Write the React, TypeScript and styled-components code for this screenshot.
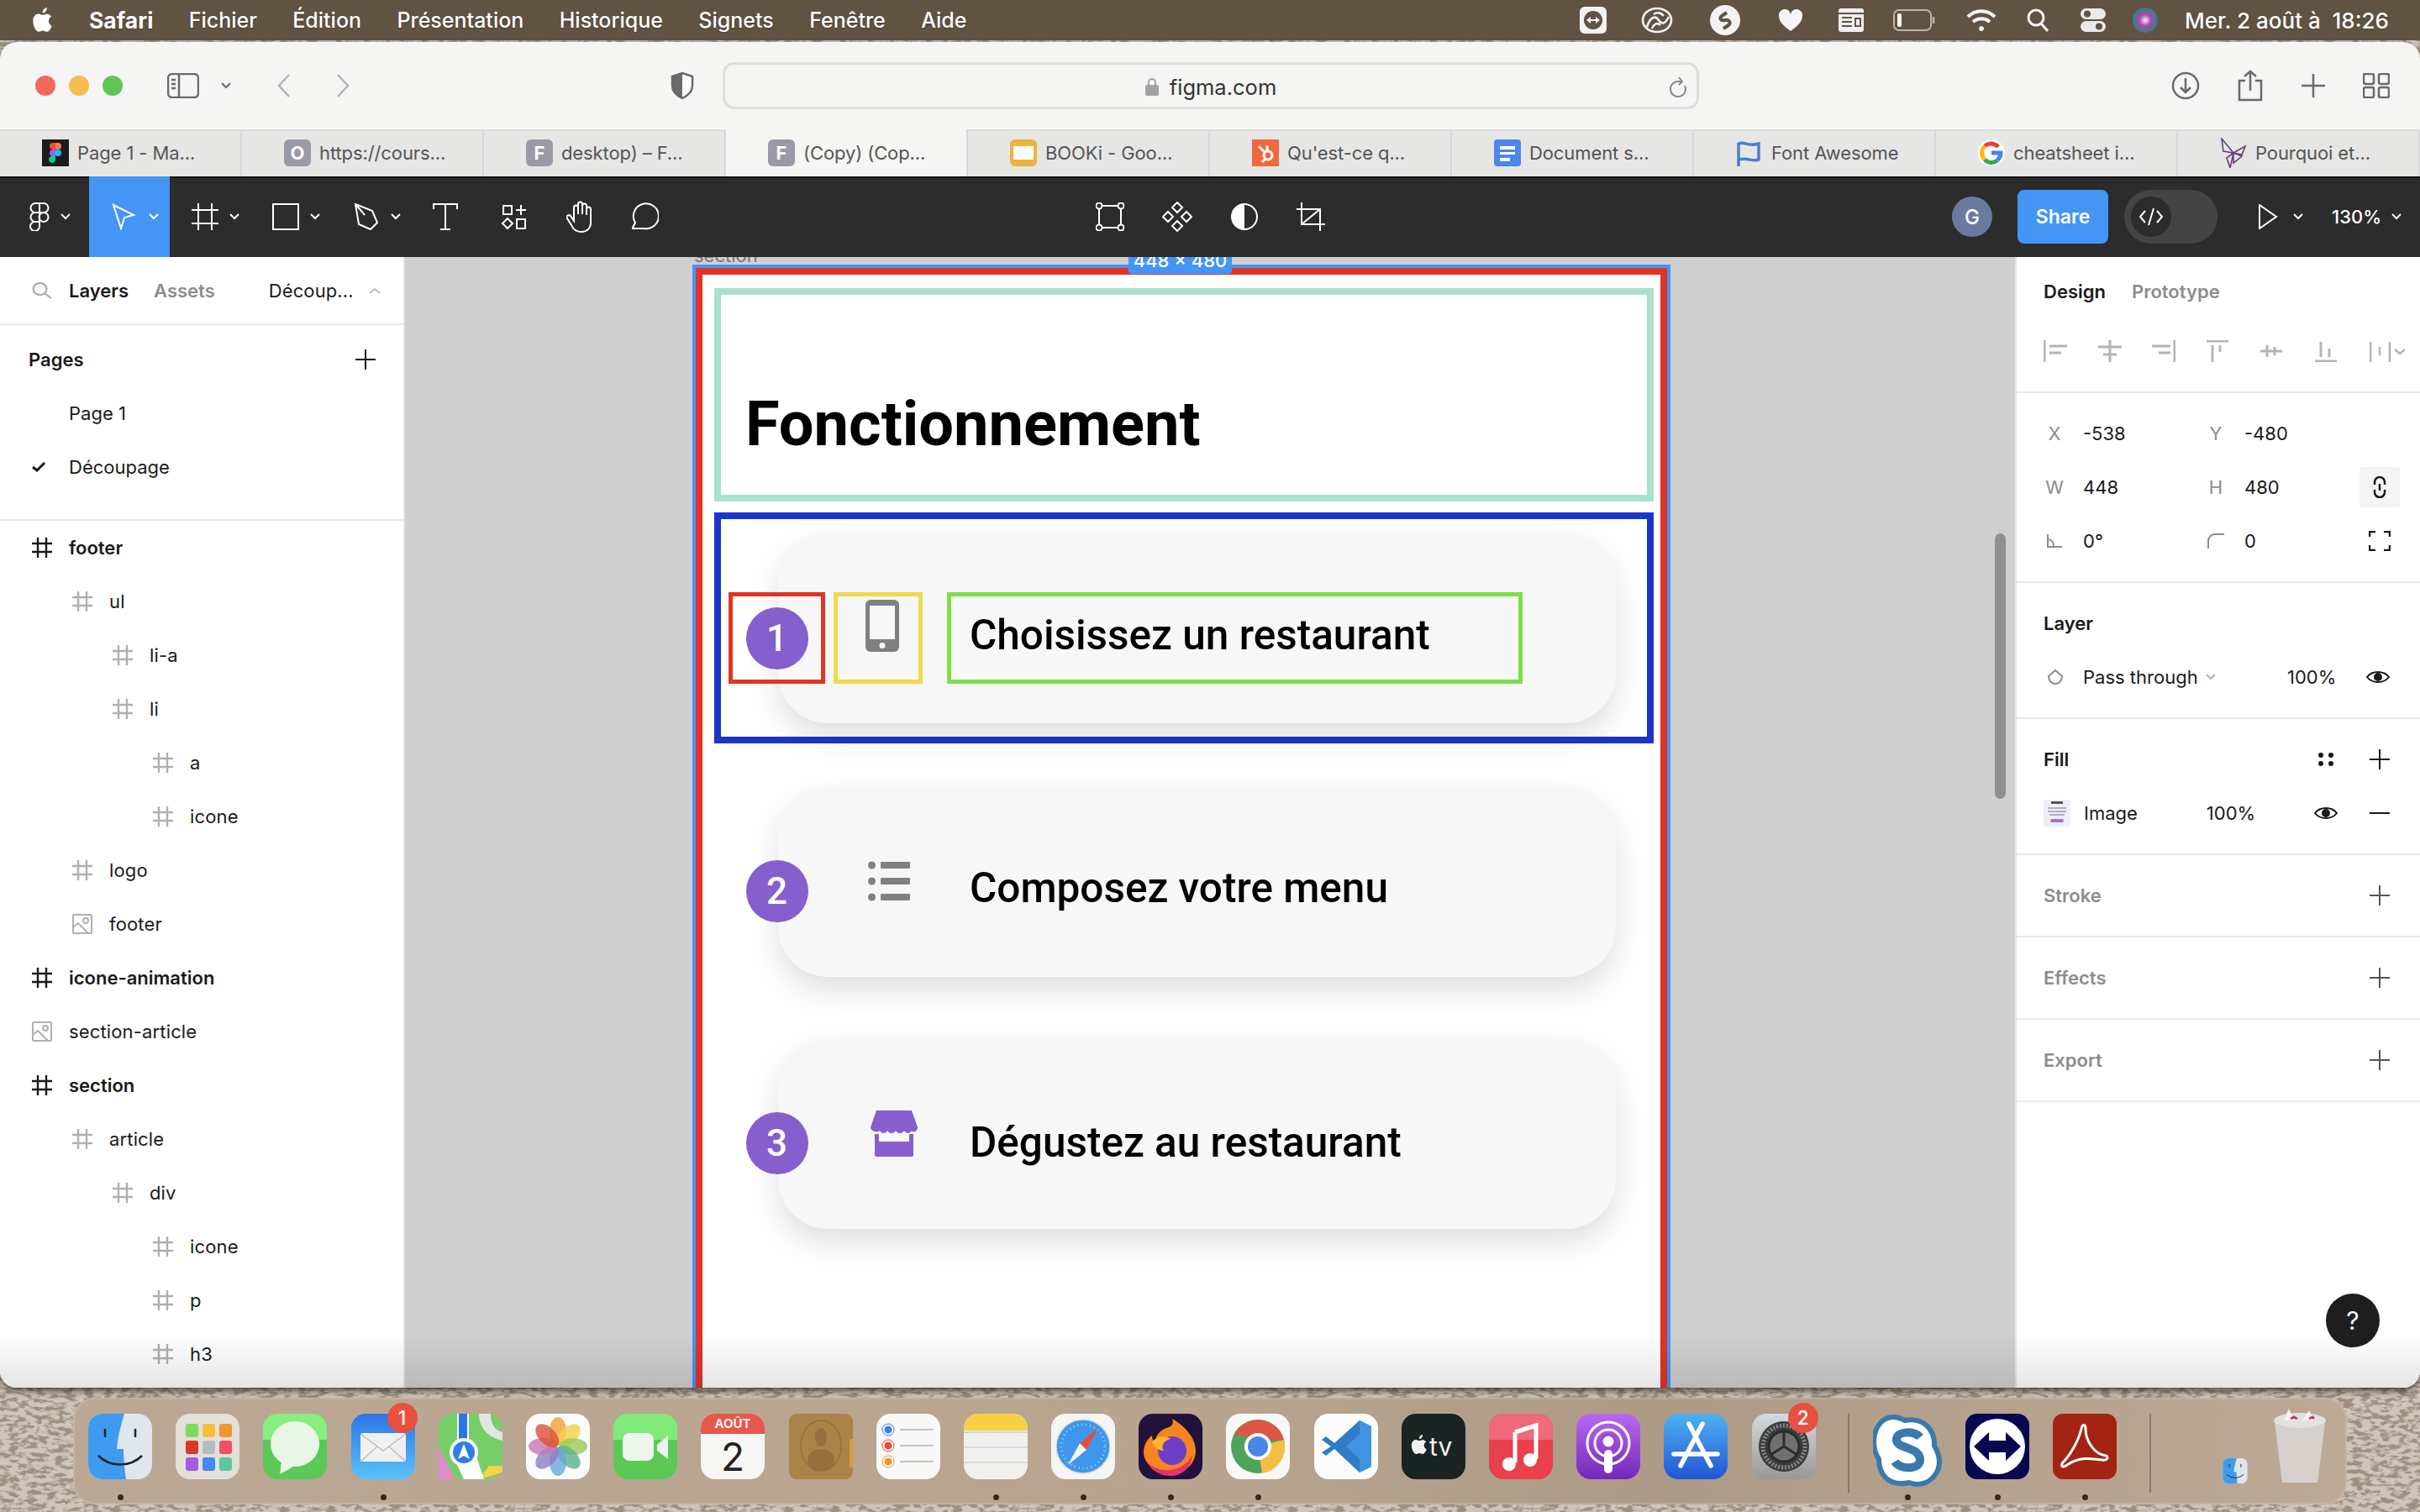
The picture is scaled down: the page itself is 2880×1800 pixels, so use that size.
import React from "react";
import styled, { createGlobalStyle } from "styled-components";

const GlobalStyle = createGlobalStyle`
  html, body { margin: 0; padding: 0; }
  body { width: 2880px; height: 1800px; overflow: hidden; font-family: "Inter", "Liberation Sans", sans-serif; }
  * { box-sizing: border-box; }
`;

const wallpaper = `url("data:image/svg+xml,%3Csvg xmlns='http://www.w3.org/2000/svg' width='600' height='300'%3E%3Cfilter id='n'%3E%3CfeTurbulence type='fractalNoise' baseFrequency='.09 .2' numOctaves='3' seed='4'/%3E%3CfeColorMatrix values='0 0 0 0 .34 0 0 0 0 .28 0 0 0 0 .22 4 4 0 0 -3.7'/%3E%3C/filter%3E%3Crect width='600' height='300' fill='%23cfc5b8'/%3E%3Crect width='600' height='300' filter='url(%23n)'/%3E%3C/svg%3E")`;

const Desktop = styled.div`
  width: 2880px;
  height: 1800px;
  display: flex;
  flex-direction: column;
  background: #a3968a ${wallpaper};
  overflow: hidden;
`;

/* ---------- mac menu bar ---------- */
const MenuBar = styled.div`
  height: 48px;
  flex: none;
  background: #615342;
  display: flex;
  align-items: center;
  padding: 0 37px 0 38px;
  color: #fff;
  font-size: 25px;
  text-shadow: 0 1px 2px rgba(0, 0, 0, 0.3);
`;

const MenuItem = styled.span`
  margin-left: 42.4px;
  font-weight: 500;
  white-space: nowrap;
`;

const AppName = styled.span`
  margin-left: 42px;
  font-size: 26.5px;
  font-weight: 700;
`;

const StatusArea = styled.div`
  margin-left: auto;
  display: flex;
  align-items: center;
`;

const StatusSlot = styled.div<{ $w: number }>`
  width: ${(p) => p.$w}px;
  display: flex;
  justify-content: center;
  align-items: center;
`;

const Clock = styled.span`
  margin-left: 18px;
  font-weight: 500;
  font-size: 26px;
  white-space: pre;
`;

/* ---------- window ---------- */
const Window = styled.div`
  margin-top: 2px;
  height: 1602px;
  flex: none;
  position: relative;
  display: flex;
  flex-direction: column;
  background: #f5f5f3;
  border-radius: 20px;
  overflow: hidden;
  box-shadow: 0 4px 8px rgba(0, 0, 0, 0.6);
  &::after {
    content: "";
    position: absolute;
    left: 0;
    right: 0;
    bottom: 0;
    height: 64px;
    pointer-events: none;
    background: linear-gradient(rgba(0, 0, 0, 0), rgba(0, 0, 0, 0.1));
  }
`;

const SafariBar = styled.div`
  height: 104px;
  flex: none;
  display: flex;
  align-items: center;
  padding-left: 42px;
  color: #6a6a6a;
`;

const Light = styled.span<{ $c: string }>`
  width: 24px;
  height: 24px;
  border-radius: 50%;
  margin-right: 16px;
  background: ${(p) => p.$c};
`;

const NavCluster = styled.div`
  display: flex;
  align-items: center;
  margin-left: 37px;
  gap: 26px;
`;

const ChevronNav = styled.div`
  display: flex;
  gap: 54px;
  margin-left: 55px;
  color: #b4b4b4;
`;

const ShieldSlot = styled.div`
  margin-left: 382px;
  display: flex;
`;

const UrlBar = styled.div`
  width: 1162px;
  height: 56px;
  margin-left: 34px;
  border: 3px solid #dededc;
  border-radius: 14px;
  display: flex;
  align-items: center;
  justify-content: center;
  position: relative;
  color: #333;
  font-size: 25.5px;
  padding-top: 2px;
  gap: 13px;
`;

const Reload = styled.span`
  position: absolute;
  right: 10px;
  top: 14px;
  display: flex;
  color: #8a8a8a;
`;

const SafariActions = styled.div`
  margin-left: auto;
  display: flex;
  align-items: center;
  gap: 44px;
  padding-right: 36px;
`;

const TabStrip = styled.div`
  height: 56px;
  flex: none;
  display: flex;
`;

const Tab = styled.div<{ $active?: boolean }>`
  width: 288px;
  display: flex;
  align-items: center;
  padding-left: 50px;
  gap: 10px;
  font-size: 22px;
  letter-spacing: -0.1px;
  color: #555;
  background: ${(p) => (p.$active ? "#f5f5f3" : "#e6e6e5")};
  border-right: 2px solid #d8d8d8;
  box-shadow: ${(p) => (p.$active ? "none" : "inset 0 2px 0 #dcdcdc")};
`;

const Favicon = styled.span<{ $bg: string }>`
  width: 32px;
  height: 32px;
  flex: none;
  border-radius: 6px;
  display: flex;
  align-items: center;
  justify-content: center;
  color: #fff;
  font-size: 22px;
  font-weight: 700;
  background: ${(p) => p.$bg};
`;

/* ---------- figma toolbar ---------- */
const Toolbar = styled.div`
  height: 96px;
  flex: none;
  display: grid;
  grid-template-columns: 1fr auto 1fr;
  align-items: stretch;
  background: #2c2c2c;
  box-shadow: inset 0 2px 0 #111;
  color: #fff;
`;

const ToolGroup = styled.div`
  display: flex;
  align-items: stretch;
`;

const ToolCell = styled.div<{ $w: number; $active?: boolean; $menu?: boolean }>`
  width: ${(p) => p.$w}px;
  display: flex;
  align-items: center;
  justify-content: center;
  gap: ${(p) => (p.$menu ? "13px" : "0")};
  padding-left: ${(p) => (p.$menu ? "13px" : "0")};
  background: ${(p) => (p.$active ? "#4495f5" : "transparent")};
`;

const CenterTools = styled.div`
  display: flex;
  align-items: center;
  gap: 45px;
`;

const RightTools = styled.div`
  display: flex;
  align-items: center;
  justify-content: flex-end;
  padding-right: 22px;
`;

const Avatar = styled.span`
  width: 48px;
  height: 48px;
  border-radius: 50%;
  background: #6a7aa0;
  display: flex;
  align-items: center;
  justify-content: center;
  font-size: 24px;
  font-weight: 500;
`;

const ShareButton = styled.span`
  width: 108px;
  height: 64px;
  margin-left: 30px;
  border-radius: 8px;
  background: #4495f5;
  display: flex;
  align-items: center;
  justify-content: center;
  font-size: 23px;
  font-weight: 600;
`;

const CodeToggle = styled.span`
  width: 111px;
  height: 64px;
  margin-left: 19px;
  border-radius: 32px;
  background: #444;
  padding: 8px;
  display: flex;
`;

const CodeKnob = styled.span`
  width: 48px;
  height: 48px;
  border-radius: 50%;
  background: #2c2c2c;
  display: flex;
  align-items: center;
  justify-content: center;
`;

const PlayCell = styled.span`
  display: flex;
  align-items: center;
  gap: 18px;
  margin-left: 48px;
`;

const Zoom = styled.span`
  display: flex;
  align-items: center;
  gap: 12px;
  margin-left: 34px;
  font-size: 22px;
  font-weight: 500;
`;

/* ---------- editor ---------- */
const Editor = styled.div`
  flex: 1;
  min-height: 0;
  display: flex;
`;

const LeftPanel = styled.aside`
  width: 482px;
  flex: none;
  background: #fff;
  border-right: 2px solid #e5e5e5;
  overflow: hidden;
`;

const PanelHeader = styled.div`
  height: 81px;
  display: flex;
  align-items: center;
  padding-left: 38px;
  border-bottom: 2px solid #e8e8e8;
  font-size: 22px;
`;

const HeaderTab = styled.span<{ $active?: boolean; $ml: number }>`
  margin-left: ${(p) => p.$ml}px;
  font-weight: 600;
  color: ${(p) => (p.$active ? "#1a1a1a" : "#8c8c8c")};
`;

const PagePicker = styled.span`
  margin-left: 64px;
  display: flex;
  align-items: center;
  gap: 18px;
  color: #1a1a1a;
  letter-spacing: 0.1px;
`;

const PagesBlock = styled.div`
  padding: 9px 0 30px;
  border-bottom: 2px solid #e8e8e8;
`;

const PageRow = styled.div<{ $title?: boolean }>`
  height: 64px;
  display: flex;
  align-items: center;
  position: relative;
  padding-left: ${(p) => (p.$title ? 34 : 82)}px;
  font-size: 22px;
  font-weight: ${(p) => (p.$title ? 600 : 400)};
  color: #1a1a1a;
`;

const RowEnd = styled.span`
  position: absolute;
  left: 423px;
  display: flex;
`;

const RowCheck = styled.span`
  position: absolute;
  left: 38px;
  display: flex;
`;

const LayerRow = styled.div<{ $depth: number; $bold?: boolean }>`
  height: 64px;
  display: flex;
  align-items: center;
  gap: 20px;
  padding-left: ${(p) => 38 + p.$depth * 48}px;
  font-size: 22px;
  font-weight: ${(p) => (p.$bold ? 600 : 400)};
  letter-spacing: ${(p) => (p.$bold ? "0" : "0.15px")};
  color: #1a1a1a;
  svg { flex: none; }
`;

const Canvas = styled.main`
  flex: 1;
  min-width: 0;
  position: relative;
  overflow: hidden;
  background: #cfcfcf;
  padding: 9px 0 0 342px;
`;

const FrameLabel = styled.span`
  position: absolute;
  top: -15px;
  left: 344px;
  font-size: 22px;
  color: #777;
`;

const SizeBadge = styled.span`
  position: absolute;
  top: -8px;
  left: 861px;
  width: 123px;
  height: 28px;
  z-index: 2;
  border-radius: 0 0 4px 4px;
  background: #4495f5;
  color: #fff;
  font-size: 22px;
  font-weight: 500;
  text-align: center;
  line-height: 24px;
`;

const Selection = styled.div`
  width: 1164px;
  height: 1500px;
  border: 4px solid #4495f5;
`;

const SectionFrame = styled.section`
  height: 100%;
  border: 8px solid #e13426;
  background: #fff;
  padding: 16px 8px 0 14px;
`;

const HeadingBox = styled.div`
  height: 254px;
  border: 8px solid #abe0d0;
  padding: 114px 0 0 29px;
`;

const Heading = styled.h2`
  margin: 0;
  font-family: "Roboto", sans-serif;
  font-size: 74px;
  line-height: 80px;
  font-weight: 700;
  color: #000;
`;

const StepBox = styled.div`
  height: 275px;
  margin-top: 13px;
  border: 8px solid #1b35c9;
  padding: 17px 0 0 68px;
`;

const StepCard = styled.article<{ $mt?: number; $pt: number }>`
  width: 997px;
  height: 226px;
  margin-top: ${(p) => p.$mt ?? 0}px;
  border-radius: 60px;
  background: #f7f7f7;
  box-shadow: 0 16px 36px rgba(0, 0, 0, 0.13);
  display: flex;
  align-items: center;
  padding-top: ${(p) => p.$pt}px;
`;

const LooseCard = styled(StepCard)`
  margin-left: 76px;
`;

const BadgeSlot = styled.div<{ $border?: string }>`
  width: 115px;
  height: 109px;
  margin-left: -59px;
  flex: none;
  display: flex;
  align-items: center;
  justify-content: center;
  border: 5px solid ${(p) => p.$border ?? "transparent"};
`;

const StepNumber = styled.span`
  width: 74px;
  height: 74px;
  border-radius: 50%;
  background: #865fce;
  color: #fff;
  display: flex;
  align-items: center;
  justify-content: center;
  font-family: "Roboto", sans-serif;
  font-size: 44px;
  font-weight: 500;
`;

const IconSlot = styled.div<{ $border?: string; $x: number; $y: number }>`
  width: 106px;
  height: 109px;
  margin-left: 10px;
  flex: none;
  border: 5px solid ${(p) => p.$border ?? "transparent"};
  padding: ${(p) => p.$y}px 0 0 ${(p) => p.$x}px;
  svg { display: block; }
`;

const TextSlot = styled.div<{ $border?: string; $lift?: number }>`
  width: 685px;
  height: 109px;
  margin-left: 29px;
  flex: none;
  display: flex;
  align-items: center;
  padding: 0 0 ${(p) => p.$lift ?? 8}px 22px;
  border: 5px solid ${(p) => p.$border ?? "transparent"};
`;

const StepTitle = styled.h3`
  margin: 0;
  font-family: "Roboto", sans-serif;
  font-size: 49.5px;
  font-weight: 500;
  color: #000;
  white-space: nowrap;
`;

const ScrollThumb = styled.span`
  position: absolute;
  top: 329px;
  right: 11px;
  width: 13px;
  height: 316px;
  border-radius: 7px;
  background: #8f8f8f;
`;

const HelpButton = styled.span`
  position: absolute;
  right: 48px;
  bottom: 48px;
  width: 64px;
  height: 64px;
  border-radius: 50%;
  background: #1e1e1e;
  color: #fff;
  z-index: 3;
  display: flex;
  align-items: center;
  justify-content: center;
  font-size: 30px;
`;

const RightPanel = styled.aside`
  width: 482px;
  flex: none;
  background: #fff;
  border-left: 2px solid #e5e5e5;
  font-size: 22px;
  color: #1a1a1a;
`;

const DesignHead = styled.div`
  height: 162px;
  border-bottom: 2px solid #e8e8e8;
`;

const DesignTabs = styled.div`
  height: 81px;
  padding-left: 32px;
  display: flex;
  align-items: center;
  gap: 31px;
`;

const DesignTab = styled.span<{ $active?: boolean }>`
  font-weight: 600;
  color: ${(p) => (p.$active ? "#1a1a1a" : "#8c8c8c")};
`;

const AlignRow = styled.div`
  display: flex;
  padding-left: 32px;
  gap: 36.6px;
  color: #b3b3b3;
  height: 26px;
  margin-top: 18px;
`;

const PanelSection = styled.div`
  padding: 16px 0;
  border-bottom: 2px solid #e8e8e8;
`;

const PropRow = styled.div`
  height: 64px;
  display: grid;
  grid-template-columns: 58px 134px 58px 125px 1fr;
  padding-left: 21px;
  align-items: center;
`;

const PropLabel = styled.span`
  color: #8c8c8c;
  display: flex;
  justify-content: center;
  padding-right: 10px;
  font-size: 22px;
`;

const ActionCell = styled.span<{ $boxed?: boolean }>`
  width: 48px;
  height: 48px;
  margin-left: 12px;
  display: flex;
  align-items: center;
  justify-content: center;
  border-radius: 4px;
  background: ${(p) => (p.$boxed ? "#f4f4f4" : "transparent")};
`;

const SectionRow = styled.div`
  height: 64px;
  padding-left: 32px;
  padding-right: 36px;
  display: flex;
  align-items: center;
  position: relative;
`;

const SectionTitle = styled.span<{ $muted?: boolean }>`
  font-weight: 600;
  color: ${(p) => (p.$muted ? "#8c8c8c" : "#1a1a1a")};
`;

const RowTools = styled.span<{ $gap?: number }>`
  margin-left: auto;
  display: flex;
  align-items: center;
  gap: ${(p) => p.$gap ?? 0}px;
`;

const ModeIcon = styled.span`
  width: 48px;
  display: flex;
  justify-content: center;
`;

const PassValue = styled.span`
  display: flex;
  align-items: center;
  gap: 9px;
  width: 290px;
  margin-left: -10px;
`;

const Percent = styled.span<{ $w: number; $ml: number }>`
  width: ${(p) => p.$w}px;
  margin-left: ${(p) => p.$ml}px;
`;

const FillThumb = styled.span`
  display: flex;
  margin-right: 16px;
`;

const HeaderChevron = styled.svg`
  flex: none;
`;

/* ---------- dock ---------- */
const Dock = styled.div`
  width: 2706px;
  height: 127px;
  margin: 12px 0 0 87px;
  flex: none;
  padding: 19px 0 0 18px;
  display: flex;
  border-radius: 26px;
  background: linear-gradient(90deg, #bba894, #b8a48f 50%, #ad9b87 70%, #bcaa97);
  box-shadow: inset 0 0 0 2px rgba(255, 255, 255, 0.14);
`;

const DockItem = styled.div<{ $w?: number; $ml?: number; $running?: boolean }>`
  width: ${(p) => p.$w ?? 76}px;
  margin-left: ${(p) => p.$ml ?? 28.2}px;
  flex: none;
  display: flex;
  flex-direction: column;
  align-items: center;
  position: relative;
  &:first-child { margin-left: 0; }
  &::after {
    content: "";
    position: absolute;
    top: 96px;
    left: 50%;
    width: 7px;
    height: 7px;
    margin-left: -3px;
    border-radius: 50%;
    background: ${(p) => (p.$running ? "#3a2818" : "transparent")};
  }
`;

const DockBadge = styled.span`
  position: absolute;
  top: -13px;
  right: -3px;
  width: 36px;
  height: 36px;
  border-radius: 50%;
  background: #e8503f;
  color: #fff;
  display: flex;
  align-items: center;
  justify-content: center;
  font-size: 23px;
  font-weight: 500;
`;

const DockDivider = styled.span<{ $ml: number }>`
  width: 2px;
  height: 94px;
  margin: 0 0 0 ${(p) => p.$ml}px;
  flex: none;
  background: #8b7866;
`;

const MiniFinder = styled.span`
  margin-top: 53px;
  display: flex;
`;

const TrashHolder = styled.span`
  margin-top: -6px;
  display: flex;
`;

/* ---------- small icons ---------- */
type IconProps = { s?: number; c?: string };

const Chevron = ({ c = "#fff" }: { c?: string }) => (
  <svg width="12" height="8" viewBox="0 0 12 8" fill="none" stroke={c} strokeWidth="2">
    <path d="M1 1l5 5 5-5" />
  </svg>
);

const Plus = ({ c = "#1a1a1a" }: IconProps) => (
  <svg width="24" height="24" viewBox="0 0 24 24" stroke={c} strokeWidth="2">
    <path d="M0 12h24M12 0v24" />
  </svg>
);

const FrameGlyph = ({ c = "#b0b0b0" }: IconProps) => (
  <svg width="24" height="24" viewBox="0 0 24 24" stroke={c} strokeWidth="2.4">
    <path d="M0 7h24M0 17h24M7 0v24M17 0v24" />
  </svg>
);

const ImageGlyph = () => (
  <svg width="24" height="24" viewBox="0 0 24 24" fill="none" stroke="#b0b0b0" strokeWidth="2">
    <rect x="1" y="1" width="22" height="22" rx="1" />
    <circle cx="16" cy="8" r="3" />
    <path d="M1 16l6-5 12 12" />
  </svg>
);

const Eye = () => (
  <svg width="28" height="16" viewBox="0 0 28 16" fill="none" stroke="#1a1a1a" strokeWidth="2">
    <path d="M1 8c6-8 20-8 26 0-6 8-20 8-26 0z" />
    <circle cx="14" cy="8" r="4" fill="#1a1a1a" />
  </svg>
);

const Tool = ({ d, w = 32, h = 32, fill = "none" }: { d: string; w?: number; h?: number; fill?: string }) => (
  <svg width={w} height={h} viewBox={`0 0 ${w} ${h}`} fill={fill} stroke="currentColor" strokeWidth="2">
    <path d={d} />
  </svg>
);

const FigmaMark = () => (
  <svg width="24" height="34" viewBox="0 0 24 34" fill="none" stroke="#fff" strokeWidth="2">
    <path d="M12 1H7a5.5 5.5 0 0 0 0 11h5zM12 1h5a5.5 5.5 0 0 1 0 11h-5zM12 12H7a5.5 5.5 0 0 0 0 11h5zM12 23H7a5.5 5.5 0 1 0 5 5.5z" />
    <circle cx="17" cy="17.5" r="5.5" />
  </svg>
);

const FigmaColor = () => (
  <svg width="32" height="32" viewBox="0 0 32 32">
    <rect width="32" height="32" fill="#1c1c1c" />
    <path d="M16 4h-3a4 4 0 0 0 0 8h3z" fill="#f24e1e" />
    <path d="M16 4h3a4 4 0 0 1 0 8h-3z" fill="#ff7262" />
    <path d="M16 12h-3a4 4 0 0 0 0 8h3z" fill="#a259ff" />
    <circle cx="19" cy="16" r="4" fill="#1abcfe" />
    <path d="M16 20h-3a4 4 0 1 0 3 4z" fill="#0acf83" />
  </svg>
);

const BookiFav = () => (
  <Favicon $bg="#ebb43c">
    <svg width="24" height="16"><rect width="24" height="16" fill="#fff" /></svg>
  </Favicon>
);

const HubspotFav = () => (
  <svg width="32" height="32" viewBox="0 0 32 32">
    <rect width="32" height="32" fill="#f0683e" />
    <circle cx="19" cy="19" r="5" fill="none" stroke="#fff" strokeWidth="3" />
    <path d="M18 13V7M8 8l8 8M12 27l4-4" stroke="#fff" strokeWidth="3" />
  </svg>
);

const DocsFav = () => (
  <svg width="32" height="32" viewBox="0 0 32 32">
    <rect width="32" height="32" rx="4" fill="#4d86ec" />
    <path d="M7 8h18v4H7zM7 15h18v3H7zM7 22h12v4H7z" fill="#fff" />
  </svg>
);

const FlagFav = () => (
  <svg width="32" height="32" viewBox="0 0 32 32" fill="none" stroke="#4c80c8" strokeWidth="3.5">
    <path d="M3 32V4M3 5c8-3 10 4 24 0v19c-8 3-12-3-24 0" />
  </svg>
);

const GoogleFav = () => (
  <svg width="32" height="32" viewBox="0 0 32 32" fill="none" strokeWidth="5">
    <circle cx="16" cy="16" r="16" fill="#fff" />
    <path d="M24 9a11 11 0 0 0-16-1" stroke="#ea4335" />
    <path d="M8 8a11 11 0 0 0 0 16" stroke="#fbbc05" />
    <path d="M8 24a11 11 0 0 0 15 1" stroke="#34a853" />
    <path d="M23 25c3-3 4-6 4-9H16" stroke="#4285f4" />
  </svg>
);

const ButterflyFav = () => (
  <svg width="32" height="36" viewBox="0 0 32 36" fill="none" stroke="#6b3f78" strokeWidth="1.6">
    <path d="M2 1l14 17L4 16zM16 18L30 10l-4 10zM16 18l-8 6 4 12zM16 18l10 4-10 8zM2 1l2 15M16 18l-4 18" />
  </svg>
);

/* ---------- menu bar status icons ---------- */
const AppleMark = ({ s = 28, c = "#fff" }: IconProps) => (
  <svg width={s} height={s * 1.15} viewBox="0 0 24 28" fill={c}>
    <path d="M17 7c-2 0-3 1.300-5 1.300S9 7 7 7c-3 0-6 3-6 8 0 5 3 12 6.500 12 2 0 2.500-1.200 4.500-1.200s2.500 1.200 4.500 1.200c2.500 0 4.500-3.700 5.500-6.700-2.300-1-3.500-3-3.500-5.300 0-2 1-3.800 3-5-1.200-1.800-3.300-3-5-3zM16.500 0c-2.500.3-5 2.600-4.700 6 2.600.1 5-2.600 4.700-6z" />
  </svg>
);

const StatusIcons: React.ReactNode[] = [
  <svg width="32" height="32" viewBox="0 0 32 32" key="tv">
    <rect width="32" height="32" rx="6" fill="#f2f2f2" />
    <circle cx="16" cy="16" r="11" fill="#615342" />
    <path d="M8 16l5-4v3h6v-3l5 4-5 4v-3h-6v3z" fill="#f2f2f2" />
  </svg>,
  <svg width="40" height="32" viewBox="0 0 40 32" fill="none" stroke="#f2f2f2" strokeWidth="2.6" key="cc">
    <ellipse cx="20" cy="16" rx="17" ry="14" />
    <path d="M8 24c4-12 10-14 14-8 4 6 8 4 12-4M14 26c2-5 6-8 10-4M16 9c4-3 9-2 12 2" />
  </svg>,
  <svg width="36" height="36" viewBox="0 0 36 36" key="sh">
    <circle cx="18" cy="18" r="18" fill="#f2f2f2" />
    <path d="M20 9l-6 4c-4 3 0 6 4 5s8 3 4 6l-6 4" fill="none" stroke="#615342" strokeWidth="4" />
  </svg>,
  <svg width="28" height="26" viewBox="0 0 28 26" fill="#f5f5f5" key="he">
    <path d="M14 26C6 20 0 15 0 8a7 7 0 0 1 14-2 7 7 0 0 1 14 2c0 7-6 12-14 18z" />
  </svg>,
  <svg width="30" height="28" viewBox="0 0 30 28" key="kb">
    <rect width="30" height="28" rx="3" fill="#efefef" />
    <path d="M0 6h30" stroke="#615342" strokeWidth="2" />
    <path d="M4 11h12M4 16h12M4 21h12M20 12h6v9h-6z" stroke="#615342" strokeWidth="2" fill="none" />
  </svg>,
  <svg width="50" height="26" viewBox="0 0 50 26" fill="none" key="ba">
    <rect x="1" y="1" width="44" height="24" rx="6" stroke="#bdb5aa" strokeWidth="2" />
    <rect x="5" y="5" width="5" height="16" rx="2" fill="#f4f4f4" />
    <path d="M48 9v8" stroke="#bdb5aa" strokeWidth="2.500" />
  </svg>,
  <svg width="36" height="28" viewBox="0 0 36 28" fill="none" stroke="#f5f5f5" strokeWidth="4" key="wi">
    <path d="M2 10c9-9 23-9 32 0M8 16c6-5 14-5 20 0" />
    <circle cx="18" cy="24" r="2.500" fill="#f5f5f5" strokeWidth="1" />
  </svg>,
  <svg width="26" height="28" viewBox="0 0 26 28" fill="none" stroke="#f5f5f5" strokeWidth="3" key="se">
    <circle cx="11" cy="11" r="9" />
    <path d="M17 18l8 9" />
  </svg>,
  <svg width="30" height="30" viewBox="0 0 30 30" key="to">
    <rect y="1" width="30" height="13" rx="6.500" fill="#e9e9e9" />
    <rect y="16" width="30" height="13" rx="6.500" fill="#e9e9e9" />
    <circle cx="8" cy="7.500" r="4" fill="#615342" />
    <circle cx="22" cy="22.500" r="4" fill="#615342" />
  </svg>,
  <svg width="30" height="30" viewBox="0 0 30 30" key="si">
    <defs>
      <radialGradient id="siri">
        <stop offset="0" stopColor="#f0f0ff" />
        <stop offset=".45" stopColor="#b04aa8" />
        <stop offset="1" stopColor="#2a7f8e" />
      </radialGradient>
    </defs>
    <circle cx="15" cy="15" r="15" fill="url(#siri)" />
  </svg>,
];
const statusWidths = [60, 92, 70, 86, 58, 92, 68, 66, 66, 58];

/* ---------- step icons ---------- */
const PhoneIcon = () => (
  <svg width="40" height="62" viewBox="0 0 40 62">
    <rect width="40" height="62" rx="6" fill="#808080" />
    <rect x="5" y="7" width="30" height="40" fill="#f7f7f7" />
    <circle cx="20" cy="54.500" r="3.500" fill="#f7f7f7" />
  </svg>
);

const ListIcon = () => (
  <svg width="50" height="48" viewBox="0 0 50 48" fill="#808080">
    <circle cx="4.500" cy="5" r="4.500" />
    <circle cx="4.500" cy="24" r="4.500" />
    <circle cx="4.500" cy="43" r="4.500" />
    <rect x="15" y="1" width="35" height="8" rx="1" />
    <rect x="15" y="20" width="35" height="8" rx="1" />
    <rect x="15" y="39" width="35" height="8" rx="1" />
  </svg>
);

const StoreIcon = () => (
  <svg width="56" height="55" viewBox="0 0 56 55">
    <path d="M7 0h42l7 20c0 5-5 7-7 4-2 4-7 4-9 0-2 4-8 4-10 0-2 4-8 4-10 0-2 4-7 4-9 0-2 3-11 1-11-4z" fill="#865fce" />
    <path d="M5 28h5v9h36v-9h5v25a2 2 0 0 1-2 2H7a2 2 0 0 1-2-2z" fill="#865fce" />
  </svg>
);

/* ---------- dock icons ---------- */
const DI = ({ children, w = 76, h = 78, vb }: { children: React.ReactNode; w?: number; h?: number; vb?: string }) => (
  <svg width={w} height={h} viewBox={vb ?? `0 0 ${w} ${h}`}>{children}</svg>
);

const FinderIcon = ({ w = 76, h = 78 }: { w?: number; h?: number }) => (
  <DI w={w} h={h} vb="0 0 76 78">
    <rect width="76" height="78" rx="17" fill="#dfe6ee" />
    <path d="M17 0h26c-5 16-8 30-9 42h8c0 12 1 24 3 36H17A17 17 0 0 1 0 61V17A17 17 0 0 1 17 0z" fill="#3f9bf0" />
    <path d="M20 18v10M56 18v10" stroke="#222" strokeWidth="2.500" />
    <path d="M12 50c14 14 38 14 52 0" fill="none" stroke="#222" strokeWidth="2.500" />
  </DI>
);

const launchColors = ["#7ed957", "#f6bf3a", "#ee9530", "#d8392b", "#b4bcc0", "#ef5066", "#a35be0", "#3f8cf7", "#5ec7a0"];
const LaunchpadIcon = () => (
  <DI>
    <rect width="76" height="78" rx="17" fill="#e3dfd9" />
    {launchColors.map((c, i) => (
      <rect key={c} x={12 + (i % 3) * 20} y={12 + Math.floor(i / 3) * 20} width="15" height="16" rx="3" fill={c} />
    ))}
  </DI>
);

const MessagesIcon = () => (
  <DI>
    <rect width="76" height="78" rx="17" fill="#5cc957" />
    <path d="M0 17A17 17 0 0 1 17 0h42a17 17 0 0 1 17 17v14H0z" fill="#87ee7f" />
    <ellipse cx="38" cy="36" rx="29" ry="27" fill="#e9f5e6" />
    <path d="M22 56l-2 16 16-9z" fill="#e9f5e6" />
  </DI>
);

const MailIcon = () => (
  <DI>
    <defs>
      <linearGradient id="mailG" x1="0" y1="0" x2="0" y2="1">
        <stop offset="0" stopColor="#2f74e6" />
        <stop offset="1" stopColor="#58c3fa" />
      </linearGradient>
    </defs>
    <rect width="76" height="78" rx="17" fill="url(#mailG)" />
    <rect x="11" y="23" width="54" height="34" rx="3" fill="#f0f0f0" />
    <path d="M11 24l27 20 27-20M11 57l20-18M65 57L45 39" fill="none" stroke="#bdbdbd" strokeWidth="1.500" />
  </DI>
);

const MapsIcon = () => (
  <DI>
    <rect width="76" height="78" rx="17" fill="#77cf6a" />
    <path d="M0 40l20 38H0z" fill="#e28ccc" />
    <path d="M48 78l28-8v-8H60l-12 16z" fill="#f7d24a" />
    <path d="M48 0h14c0 14 6 20 14 22v10C58 28 48 16 48 0z" fill="#e4e4e4" />
    <path d="M22 0h14v38H22zM16 48l14 30h24l-10-30z" fill="#fff" />
    <path d="M24 0h10v30H24z" fill="#2f74e6" />
    <circle cx="30" cy="46" r="17" fill="#fff" />
    <circle cx="30" cy="46" r="13" fill="#2f7de6" />
    <path d="M30 36l7 18-7-4-7 4z" fill="#fff" />
  </DI>
);

const petals = ["#f0a23a", "#f4d34a", "#9ccb5c", "#5fb38a", "#6ca6d8", "#8f80c8", "#c77ab5", "#e0503a"];
const PhotosIcon = () => (
  <DI>
    <rect width="76" height="78" rx="17" fill="#fbfbfb" />
    {petals.map((c, i) => (
      <ellipse key={c} cx="38" cy="21" rx="10" ry="17" fill={c} opacity=".82" transform={`rotate(${i * 45} 38 39)`} />
    ))}
  </DI>
);

const FacetimeIcon = () => (
  <DI>
    <rect width="76" height="78" rx="17" fill="#5cc957" />
    <path d="M0 17A17 17 0 0 1 17 0h42a17 17 0 0 1 17 17v14H0z" fill="#82ea79" />
    <rect x="11" y="23" width="37" height="33" rx="8" fill="#eef5ec" />
    <path d="M52 37l13-11v28L52 44z" fill="#eef5ec" />
  </DI>
);

const CalendarIcon = () => (
  <DI>
    <rect width="76" height="78" rx="17" fill="#f6f6f4" />
    <path d="M0 24V17A17 17 0 0 1 17 0h42a17 17 0 0 1 17 17v7z" fill="#e7584c" />
    <text x="38" y="17" textAnchor="middle" fontSize="15" fontWeight="600" fill="#fff" fontFamily="Inter">AOÛT</text>
    <text x="38" y="68" textAnchor="middle" fontSize="46" fill="#222" fontFamily="Inter">2</text>
  </DI>
);

const ContactsIcon = () => (
  <DI>
    <rect width="76" height="78" rx="9" fill="#ab8347" />
    <rect x="72" y="30" width="4" height="34" fill="#d99a3a" />
    <ellipse cx="38" cy="38" rx="24" ry="30" fill="none" stroke="#94703c" strokeWidth="1.500" />
    <ellipse cx="38" cy="28" rx="7" ry="11" fill="#94703c" />
    <ellipse cx="38" cy="55" rx="16" ry="13" fill="#94703c" />
  </DI>
);

const RemindersIcon = () => (
  <DI>
    <rect width="76" height="78" rx="17" fill="#f8f8f6" />
    {["#3a7ee8", "#e5493a", "#e39a2f"].map((c, i) => (
      <g key={c}>
        <circle cx="14" cy={19 + i * 19} r="5" fill={c} stroke="#fff" strokeWidth="1" />
        <circle cx="14" cy={19 + i * 19} r="7" fill="none" stroke={c} strokeWidth="1" />
        <path d={`M28 ${19 + i * 19}h40`} stroke="#c4c4c4" strokeWidth="2" />
      </g>
    ))}
  </DI>
);

const NotesIcon = () => (
  <DI>
    <rect width="76" height="78" rx="17" fill="#f1f0ec" />
    <path d="M0 20V17A17 17 0 0 1 17 0h42a17 17 0 0 1 17 17v3z" fill="#f7cf45" />
    <path d="M0 22h76" stroke="#bcbcb8" strokeWidth="2" strokeDasharray="1 1" />
    <path d="M0 40h76M0 58h76" stroke="#dcdcd8" strokeWidth="2" />
  </DI>
);

const SafariIcon = () => (
  <DI>
    <rect width="76" height="78" rx="17" fill="#f5f5f5" />
    <circle cx="38" cy="39" r="32" fill="#3d97ea" stroke="#dcdcdc" strokeWidth="1.500" />
    <circle cx="38" cy="39" r="26" fill="none" stroke="#a7d0f5" strokeWidth="3" strokeDasharray="1 4" />
    <path d="M56 17L34 35l8 8z" fill="#ee4a3b" />
    <path d="M20 61l14-26 8 8z" fill="#f4f4f4" />
  </DI>
);

const FirefoxIcon = () => (
  <DI>
    <rect width="76" height="78" rx="17" fill="#20123a" />
    <path d="M40 6c14 8 28 22 28 38 0 16-14 28-30 28S6 60 6 46c0-8 4-16 10-20 0 4 2 8 4 8 0-10 8-16 16-18 4-1 6-6 4-10z" fill="#f6841f" />
    <path d="M10 56c8 14 40 18 54-6-2 16-14 24-26 24S14 68 10 56z" fill="#e2336e" />
    <circle cx="40" cy="44" r="17" fill="#6c3fc4" />
    <path d="M16 34c6-8 16-8 22-4-8 2-12 8-8 14-6 0-12-4-14-10z" fill="#ffb52e" />
  </DI>
);

const ChromeIcon = () => (
  <DI>
    <rect width="76" height="78" rx="17" fill="#f8f8f6" />
    <circle cx="38" cy="39" r="32" fill="#4ea35b" />
    <path d="M38 39L69 31a32 32 0 0 1-26 40z" fill="#f5bd41" />
    <path d="M10 24a32 32 0 0 1 59 7H38z" fill="#dc5745" />
    <circle cx="38" cy="39" r="16" fill="#fff" />
    <circle cx="38" cy="39" r="12" fill="#4a86e8" />
  </DI>
);

const VscodeIcon = () => (
  <DI>
    <rect width="76" height="78" rx="17" fill="#fcfcfc" />
    <path d="M54 8l14 7v48l-14 7L24 42l-10 8-5-4 11-7-11-8 5-4 10 8z" fill="#2f7cc9" />
    <path d="M54 8l14 7v48l-14 7zM54 24L38 39l16 15z" fill="#3f93e2" />
  </DI>
);

const TvIcon = () => (
  <DI>
    <rect width="76" height="78" rx="17" fill="#1a2423" />
    <g transform="translate(11 25) scale(.85)"><path fill="#f2f2f2" d="M17 7c-2 0-3 1.300-5 1.300S9 7 7 7c-3 0-6 3-6 8 0 5 3 12 6.500 12 2 0 2.500-1.200 4.500-1.200s2.500 1.200 4.500 1.200c2.500 0 4.500-3.700 5.500-6.700-2.300-1-3.500-3-3.500-5.300 0-2 1-3.800 3-5-1.200-1.800-3.300-3-5-3zM16.500 0c-2.500.3-5 2.600-4.700 6 2.600.1 5-2.600 4.700-6z" /></g>
    <text x="33" y="50" fontSize="30" fill="#f2f2f2" fontFamily="Inter">tv</text>
  </DI>
);

const MusicIcon = () => (
  <DI>
    <rect width="76" height="78" rx="17" fill="#e8404c" />
    <path d="M0 17A17 17 0 0 1 17 0h42a17 17 0 0 1 17 17v14H0z" fill="#ee6a7c" />
    <path d="M31 22l25-8v40" fill="none" stroke="#fff" strokeWidth="5" />
    <path d="M31 22v36" stroke="#fff" strokeWidth="5" />
    <circle cx="24" cy="60" r="8" fill="#fff" />
    <circle cx="49" cy="55" r="8" fill="#fff" />
  </DI>
);

const PodcastIcon = () => (
  <DI>
    <defs>
      <linearGradient id="podG" x1="0" y1="0" x2="0" y2="1">
        <stop offset="0" stopColor="#bb68ef" />
        <stop offset="1" stopColor="#7328b6" />
      </linearGradient>
    </defs>
    <rect width="76" height="78" rx="17" fill="url(#podG)" />
    <circle cx="38" cy="35" r="25" fill="none" stroke="#fff" strokeWidth="3" />
    <circle cx="38" cy="35" r="16" fill="none" stroke="#fff" strokeWidth="3" />
    <circle cx="38" cy="33" r="8" fill="#fff" stroke="#9a47d6" strokeWidth="3" />
    <rect x="33" y="43" width="10" height="28" rx="5" fill="#fff" />
  </DI>
);

const AppStoreIcon = () => (
  <DI>
    <defs>
      <linearGradient id="appG" x1="0" y1="0" x2="0" y2="1">
        <stop offset="0" stopColor="#4fb1f0" />
        <stop offset="1" stopColor="#2255d5" />
      </linearGradient>
    </defs>
    <rect width="76" height="78" rx="17" fill="url(#appG)" />
    <path d="M30 12l26 50M46 12L20 62M12 48h52" stroke="#fff" strokeWidth="5.500" strokeLinecap="round" fill="none" />
  </DI>
);

const SettingsIcon = () => (
  <DI>
    <defs>
      <linearGradient id="setG" x1="0" y1="0" x2="0" y2="1">
        <stop offset="0" stopColor="#d2dbe0" />
        <stop offset="1" stopColor="#989898" />
      </linearGradient>
    </defs>
    <rect width="76" height="78" rx="17" fill="url(#setG)" />
    <circle cx="38" cy="39" r="30" fill="#3c3c3c" />
    <circle cx="38" cy="39" r="25" fill="none" stroke="#8a8a8a" strokeWidth="5" strokeDasharray="2 2" />
    <circle cx="38" cy="39" r="18" fill="#707070" stroke="#2c2c2c" strokeWidth="3" />
    <path d="M38 39V21M38 39L22 49M38 39l16 10" stroke="#2c2c2c" strokeWidth="3" />
  </DI>
);

const SkypeIcon = () => (
  <DI w={82} h={88}>
    <path d="M24 4c6 0 10 2 14 4 24-5 36 14 35 30 8 14 8 26 0 36-8 10-20 12-30 8-28 6-36-14-36-28C-2 40 0 22 8 12c4-5 10-8 16-8z" fill="#fff" stroke="#3a79ab" strokeWidth="6" />
    <path d="M56 28c-6-8-28-8-28 3s28 8 28 24c0 12-24 12-30 2" fill="none" stroke="#3a79ab" strokeWidth="10" />
  </DI>
);

const TeamviewerIcon = () => (
  <DI>
    <rect width="76" height="78" rx="14" fill="#07084f" />
    <circle cx="38" cy="39" r="33" fill="#fff" />
    <path d="M10 39l18-17v10h20V22l18 17-18 17V46H28v10z" fill="#07084f" />
  </DI>
);

const AcrobatIcon = () => (
  <DI>
    <rect width="76" height="78" rx="12" fill="#a42414" />
    <path d="M12 58c8-8 18-24 22-40 1-6 5-6 5 0 0 14 10 30 24 32 4 1 2 6-4 5-14-2-28-4-42 6-6 4-8 1-5-3z" fill="none" stroke="#fff" strokeWidth="3" />
  </DI>
);

const TrashIcon = () => (
  <svg width="66" height="90" viewBox="0 0 66 90">
    <path d="M3 16h60l-9 72H12z" fill="#dad8d6" opacity=".85" />
    <ellipse cx="33" cy="14" rx="31" ry="9" fill="#e4e2e0" />
    <path d="M14 14L20 0l6 14zM36 14L44 2l6 12z" fill="#f4f4f4" />
    <path d="M22 12l4-2 4 2M44 12l4-2 2 2" stroke="#c03a7a" strokeWidth="3" />
  </svg>
);

/* ---------- data ---------- */
const menus = ["Fichier", "Édition", "Présentation", "Historique", "Signets", "Fenêtre", "Aide"];

const tabs: { icon: React.ReactNode; label: string; active?: boolean }[] = [
  { icon: <FigmaColor />, label: "Page 1 - Ma..." },
  { icon: <Favicon $bg="#9a9aa6">O</Favicon>, label: "https://cours..." },
  { icon: <Favicon $bg="#9a9aa6">F</Favicon>, label: "desktop) – F..." },
  { icon: <Favicon $bg="#9a9aa6">F</Favicon>, label: "(Copy) (Cop...", active: true },
  { icon: <BookiFav />, label: "BOOKi - Goo..." },
  { icon: <HubspotFav />, label: "Qu'est-ce q..." },
  { icon: <DocsFav />, label: "Document s..." },
  { icon: <FlagFav />, label: "Font Awesome" },
  { icon: <GoogleFav />, label: "cheatsheet i..." },
  { icon: <ButterflyFav />, label: "Pourquoi et..." },
];

const layers: { name: string; depth: number; bold?: boolean; image?: boolean }[] = [
  { name: "footer", depth: 0, bold: true },
  { name: "ul", depth: 1 },
  { name: "li-a", depth: 2 },
  { name: "li", depth: 2 },
  { name: "a", depth: 3 },
  { name: "icone", depth: 3 },
  { name: "logo", depth: 1 },
  { name: "footer", depth: 1, image: true },
  { name: "icone-animation", depth: 0, bold: true },
  { name: "section-article", depth: 0, image: true },
  { name: "section", depth: 0, bold: true },
  { name: "article", depth: 1 },
  { name: "div", depth: 2 },
  { name: "icone", depth: 3 },
  { name: "p", depth: 3 },
  { name: "h3", depth: 3 },
];

const alignPaths = [
  "M1 0v26M7 7h22M7 15h14",
  "M0 8h28M6 17h16M14 0v26",
  "M27 0v26M0 7h22M8 15h14",
  "M0 1h26M7 6v20M16 6v8",
  "M0 13h26M8 6v14M17 8v10",
  "M0 25h26M7 2v18M17 10v10",
];

const Frame448 = () => (
  <svg width="34" height="34" viewBox="0 0 34 34" fill="none" stroke="#fff" strokeWidth="2">
    <path d="M8 4h18M8 30h18M4 8v18M30 8v18" />
    <circle cx="4" cy="4" r="3.500" /><circle cx="30" cy="4" r="3.500" />
    <circle cx="4" cy="30" r="3.500" /><circle cx="30" cy="30" r="3.500" />
  </svg>
);

const App: React.FC = () => {
  return (
    <Desktop>
      <GlobalStyle />
      {/* Menu bar */}
      <MenuBar>
        <AppleMark s={26} />
        <AppName>Safari</AppName>
        {menus.map((m) => (
          <MenuItem key={m}>{m}</MenuItem>
        ))}
        <StatusArea>
          {StatusIcons.map((icon, i) => (
            <StatusSlot key={i} $w={statusWidths[i]}>{icon}</StatusSlot>
          ))}
          <Clock>Mer. 2 août à  18:26</Clock>
        </StatusArea>
      </MenuBar>

      <Window>
        {/* Safari */}
        <SafariBar>
          <Light $c="#f1695d" />
          <Light $c="#f5be4f" />
          <Light $c="#60c554" />
          <NavCluster>
            <svg width="38" height="30" viewBox="0 0 38 30" fill="none" stroke="#6a6a6a" strokeWidth="2.500">
              <rect x="1" y="1" width="36" height="28" rx="5" />
              <path d="M14 1v28M5 8h5M5 13h5M5 18h5" />
            </svg>
            <Chevron c="#6a6a6a" />
          </NavCluster>
          <ChevronNav>
            <svg width="16" height="28" viewBox="0 0 16 28" fill="none" stroke="currentColor" strokeWidth="2.500"><path d="M14 1L2 14l12 13" /></svg>
            <svg width="16" height="28" viewBox="0 0 16 28" fill="none" stroke="currentColor" strokeWidth="2.500"><path d="M2 1l12 13L2 27" /></svg>
          </ChevronNav>
          <ShieldSlot>
            <svg width="28" height="32" viewBox="0 0 28 32">
              <path d="M14 1l12 4v11c0 8-6 12-12 15C8 28 2 24 2 16V5z" fill="#fff" stroke="#6a6a6a" strokeWidth="2.500" />
              <path d="M14 1L2 5v11c0 8 6 12 12 15z" fill="#6a6a6a" />
            </svg>
          </ShieldSlot>
          <UrlBar>
            <svg width="16" height="24" viewBox="0 0 16 24">
              <path d="M4 11V7a4 4 0 0 1 8 0v4" fill="none" stroke="#a3a3a3" strokeWidth="2" />
              <rect y="10" width="16" height="13" rx="2" fill="#a3a3a3" />
            </svg>
            figma.com
            <Reload>
              <svg width="24" height="26" viewBox="0 0 24 26" fill="none" stroke="currentColor" strokeWidth="2">
                <path d="M20 11a9 9 0 1 1-8-5h4M13 1l4 5-4 4" />
              </svg>
            </Reload>
          </UrlBar>
          <SafariActions>
            <svg width="34" height="34" viewBox="0 0 34 34" fill="none" stroke="#6a6a6a" strokeWidth="2.500">
              <circle cx="17" cy="17" r="15" /><path d="M17 8v17M11 19l6 6 6-6" />
            </svg>
            <svg width="32" height="38" viewBox="0 0 32 38" fill="none" stroke="#6a6a6a" strokeWidth="2.500">
              <path d="M10 13H3v23h26V13h-7M16 25V2M9 8l7-6 7 6" />
            </svg>
            <svg width="30" height="30" viewBox="0 0 30 30" stroke="#6a6a6a" strokeWidth="2.500"><path d="M15 1v28M1 15h28" /></svg>
            <svg width="32" height="30" viewBox="0 0 32 30" fill="none" stroke="#6a6a6a" strokeWidth="2.500">
              <rect x="1" y="1" width="12" height="12" rx="2" /><rect x="19" y="1" width="12" height="12" rx="2" />
              <rect x="1" y="17" width="12" height="12" rx="2" /><rect x="19" y="17" width="12" height="12" rx="2" />
            </svg>
          </SafariActions>
        </SafariBar>
        <TabStrip>
          {tabs.map((t) => (
            <Tab key={t.label} $active={t.active}>
              {t.icon}
              {t.label}
            </Tab>
          ))}
        </TabStrip>

        {/* Figma toolbar */}
        <Toolbar>
          <ToolGroup>
            <ToolCell $w={106} $menu><FigmaMark /><Chevron /></ToolCell>
            <ToolCell $w={96} $menu $active>
              <Tool d="M3 2l24 12-11 3-4 13z" /><Chevron />
            </ToolCell>
            <ToolCell $w={96} $menu>
              <Tool d="M8 0v32M24 0v32M0 8h32M0 24h32" /><Chevron />
            </ToolCell>
            <ToolCell $w={96} $menu>
              <Tool d="M1 1h30v30H1z" /><Chevron />
            </ToolCell>
            <ToolCell $w={96} $menu>
              <Tool d="M3 1l20 8 6 14-8 8-14-6zM3 1l11 13M21 31l8-8" /><Chevron />
            </ToolCell>
            <ToolCell $w={80}><Tool d="M2 7V1h28v6M16 1v30M10 31h12" /></ToolCell>
            <ToolCell $w={84}><Tool d="M3 3h10v10H3zM24 2v12M18 8h12M8 18l6 6-6 6-6-6zM19 19h10v11H19z" /></ToolCell>
            <ToolCell $w={76}>
              <Tool w={36} h={38} d="M9 24V8a2.500 2.500 0 0 1 5 0v8V4a2.500 2.500 0 0 1 5 0v12V6a2.500 2.500 0 0 1 5 0v11V10a2.500 2.500 0 0 1 5 0v16c0 7-5 11-11 11-7 0-10-3-12-8l-5-8c-2-3 2-5 4-3z" />
            </ToolCell>
            <ToolCell $w={72}>
              <Tool w={36} h={34} d="M5 30l3-6A15 15 0 1 1 18 31H5z" />
            </ToolCell>
          </ToolGroup>
          <CenterTools>
            <Frame448 />
            <svg width="36" height="36" viewBox="0 0 36 36" fill="none" stroke="#fff" strokeWidth="2">
              <path d="M18 1l6 6-6 6-6-6zM18 23l6 6-6 6-6-6zM7 12l6 6-6 6-6-6zM29 12l6 6-6 6-6-6z" />
            </svg>
            <svg width="34" height="34" viewBox="0 0 34 34">
              <circle cx="17" cy="17" r="15" fill="none" stroke="#fff" strokeWidth="2" />
              <path d="M17 2a15 15 0 0 0 0 30z" fill="#fff" />
            </svg>
            <Tool w={34} h={34} d="M0 8h28v26M6 0v26h28M6 26L28 8" />
          </CenterTools>
          <RightTools>
            <Avatar>G</Avatar>
            <ShareButton>Share</ShareButton>
            <CodeToggle>
              <CodeKnob>
                <svg width="30" height="22" viewBox="0 0 30 22" fill="none" stroke="#fff" strokeWidth="2">
                  <path d="M8 4l-6 7 6 7M22 4l6 7-6 7M18 1l-6 20" />
                </svg>
              </CodeKnob>
            </CodeToggle>
            <PlayCell>
              <Tool w={24} h={30} d="M2 1l20 14L2 29z" /><Chevron />
            </PlayCell>
            <Zoom>130%<Chevron /></Zoom>
          </RightTools>
        </Toolbar>

        <Editor>
          {/* Layers */}
          <LeftPanel>
            <PanelHeader>
              <svg width="24" height="20" viewBox="0 0 24 20" fill="none" stroke="#a6a6a6" strokeWidth="2">
                <ellipse cx="9.500" cy="8" rx="8" ry="7" /><path d="M15 13l8 6" />
              </svg>
              <HeaderTab $active $ml={20}>Layers</HeaderTab>
              <HeaderTab $ml={30}>Assets</HeaderTab>
              <PagePicker>
                Découp...
                <HeaderChevron width="14" height="8" viewBox="0 0 14 8" fill="none" stroke="#bbb" strokeWidth="2">
                  <path d="M1 7l6-5 6 5" />
                </HeaderChevron>
              </PagePicker>
            </PanelHeader>
            <PagesBlock>
              <PageRow $title>
                Pages
                <RowEnd><Plus /></RowEnd>
              </PageRow>
              <PageRow>Page 1</PageRow>
              <PageRow>
                <RowCheck>
                  <svg width="16" height="12" viewBox="0 0 16 12" fill="none" stroke="#1a1a1a" strokeWidth="3"><path d="M1 6l5 4 9-9" /></svg>
                </RowCheck>
                Découpage
              </PageRow>
            </PagesBlock>
            {layers.map((l, i) => (
              <LayerRow key={i} $depth={l.depth} $bold={l.bold}>
                {l.image ? <ImageGlyph /> : <FrameGlyph c={l.bold ? "#1a1a1a" : "#b0b0b0"} />}
                {l.name}
              </LayerRow>
            ))}
          </LeftPanel>

          {/* Canvas */}
          <Canvas>
            <FrameLabel>section</FrameLabel>
            <SizeBadge>448 × 480</SizeBadge>
            <Selection>
              <SectionFrame>
                <HeadingBox>
                  <Heading>Fonctionnement</Heading>
                </HeadingBox>
                <StepBox>
                  <StepCard $pt={23}>
                    <BadgeSlot $border="#e13426"><StepNumber>1</StepNumber></BadgeSlot>
                    <IconSlot $border="#f2d94a" $x={33} $y={4}><PhoneIcon /></IconSlot>
                    <TextSlot $border="#7ede47"><StepTitle>Choisissez un restaurant</StepTitle></TextSlot>
                  </StepCard>
                </StepBox>
                <LooseCard $mt={52} $pt={22}>
                  <BadgeSlot><StepNumber>2</StepNumber></BadgeSlot>
                  <IconSlot $x={36} $y={13}><ListIcon /></IconSlot>
                  <TextSlot><StepTitle>Composez votre menu</StepTitle></TextSlot>
                </LooseCard>
                <LooseCard $mt={74} $pt={22}>
                  <BadgeSlot><StepNumber>3</StepNumber></BadgeSlot>
                  <IconSlot $x={39} $y={10}><StoreIcon /></IconSlot>
                  <TextSlot $lift={3}><StepTitle>Dégustez au restaurant</StepTitle></TextSlot>
                </LooseCard>
              </SectionFrame>
            </Selection>
            <ScrollThumb />
          </Canvas>

          {/* Design panel */}
          <RightPanel>
            <DesignHead>
              <DesignTabs>
                <DesignTab $active>Design</DesignTab>
                <DesignTab>Prototype</DesignTab>
              </DesignTabs>
              <AlignRow>
                {alignPaths.map((d) => (
                  <svg key={d} width="28" height="26" viewBox="0 0 28 26" fill="none" stroke="currentColor" strokeWidth="3"><path d={d} /></svg>
                ))}
                <svg width="44" height="26" viewBox="0 0 44 26" fill="none" stroke="currentColor" strokeWidth="2.500">
                  <path d="M1 2v24M24 2v24M12 8v10M30 11l6 5 6-5" />
                </svg>
              </AlignRow>
            </DesignHead>
            <PanelSection>
              <PropRow>
                <PropLabel>X</PropLabel><span>-538</span>
                <PropLabel>Y</PropLabel><span>-480</span>
              </PropRow>
              <PropRow>
                <PropLabel>W</PropLabel><span>448</span>
                <PropLabel>H</PropLabel><span>480</span>
                <ActionCell $boxed>
                  <svg width="16" height="26" viewBox="0 0 16 26" fill="none" stroke="#1a1a1a" strokeWidth="2.500">
                    <path d="M2 10V7a6 6 0 0 1 12 0v3M2 16v3a6 6 0 0 0 12 0v-3M8 9v8" />
                  </svg>
                </ActionCell>
              </PropRow>
              <PropRow>
                <PropLabel>
                  <svg width="18" height="16" viewBox="0 0 18 16" fill="none" stroke="#8c8c8c" strokeWidth="2"><path d="M1 0v15h17M1 6c4 0 7 3 7 9" /></svg>
                </PropLabel>
                <span>0°</span>
                <PropLabel>
                  <svg width="20" height="18" viewBox="0 0 20 18" fill="none" stroke="#8c8c8c" strokeWidth="2"><path d="M1 18V9a8 8 0 0 1 8-8h11" /></svg>
                </PropLabel>
                <span>0</span>
                <ActionCell>
                  <svg width="26" height="24" viewBox="0 0 26 24" fill="none" stroke="#1a1a1a" strokeWidth="2.500"><path d="M8 1H1v6M18 1h7v6M8 23H1v-6M18 23h7v-6" /></svg>
                </ActionCell>
              </PropRow>
            </PanelSection>
            <PanelSection>
              <SectionRow><SectionTitle>Layer</SectionTitle></SectionRow>
              <SectionRow>
                <PassValue>
                  <ModeIcon>
                    <svg width="18" height="18" viewBox="0 0 18 18" fill="none" stroke="#8c8c8c" strokeWidth="2"><path d="M9 1l8 7c0 6-4 9-8 9s-8-3-8-9z" /></svg>
                  </ModeIcon>
                  Pass through
                  <Chevron c="#b3b3b3" />
                </PassValue>
                <Percent $w={90} $ml={10}>100%</Percent>
                <RowTools><Eye /></RowTools>
              </SectionRow>
            </PanelSection>
            <PanelSection>
              <SectionRow>
                <SectionTitle>Fill</SectionTitle>
                <RowTools $gap={43}>
                  <svg width="18" height="16" viewBox="0 0 18 16" fill="#1a1a1a">
                    <circle cx="3" cy="3" r="3" /><circle cx="15" cy="3" r="3" /><circle cx="3" cy="13" r="3" /><circle cx="15" cy="13" r="3" />
                  </svg>
                  <Plus />
                </RowTools>
              </SectionRow>
              <SectionRow>
                <FillThumb>
                  <svg width="32" height="32" viewBox="0 0 32 32">
                    <rect width="32" height="32" fill="#eef0f8" />
                    <rect x="9" y="2" width="14" height="3" fill="#555" />
                    <path d="M5 10h22M5 14h22M7 18h18" stroke="#9a9aa6" strokeWidth="1.500" />
                    <rect x="8" y="23" width="16" height="4" rx="2" fill="#a26ee0" />
                  </svg>
                </FillThumb>
                Image
                <Percent $w={90} $ml={82}>100%</Percent>
                <RowTools $gap={38}>
                  <Eye />
                  <svg width="24" height="2"><rect width="24" height="2" fill="#1a1a1a" /></svg>
                </RowTools>
              </SectionRow>
            </PanelSection>
            {["Stroke", "Effects", "Export"].map((name) => (
              <PanelSection key={name}>
                <SectionRow>
                  <SectionTitle $muted>{name}</SectionTitle>
                  <RowTools><Plus c="#555" /></RowTools>
                </SectionRow>
              </PanelSection>
            ))}
          </RightPanel>
        </Editor>
        <HelpButton>?</HelpButton>
      </Window>

      {/* Dock */}
      <Dock>
        <DockItem $running><FinderIcon /></DockItem>
        <DockItem><LaunchpadIcon /></DockItem>
        <DockItem><MessagesIcon /></DockItem>
        <DockItem $running><MailIcon /><DockBadge>1</DockBadge></DockItem>
        <DockItem><MapsIcon /></DockItem>
        <DockItem><PhotosIcon /></DockItem>
        <DockItem><FacetimeIcon /></DockItem>
        <DockItem><CalendarIcon /></DockItem>
        <DockItem><ContactsIcon /></DockItem>
        <DockItem><RemindersIcon /></DockItem>
        <DockItem $running><NotesIcon /></DockItem>
        <DockItem $running><SafariIcon /></DockItem>
        <DockItem $running><FirefoxIcon /></DockItem>
        <DockItem $running><ChromeIcon /></DockItem>
        <DockItem><VscodeIcon /></DockItem>
        <DockItem><TvIcon /></DockItem>
        <DockItem><MusicIcon /></DockItem>
        <DockItem><PodcastIcon /></DockItem>
        <DockItem><AppStoreIcon /></DockItem>
        <DockItem><SettingsIcon /><DockBadge>2</DockBadge></DockItem>
        <DockDivider $ml={38} />
        <DockItem $w={82} $running><SkypeIcon /></DockItem>
        <DockItem $running><TeamviewerIcon /></DockItem>
        <DockItem $running><AcrobatIcon /></DockItem>
        <DockDivider $ml={39} />
        <DockItem $w={30} $ml={85}>
          <MiniFinder><FinderIcon w={30} h={30} /></MiniFinder>
        </DockItem>
        <DockItem $w={66} $ml={29}><TrashHolder><TrashIcon /></TrashHolder></DockItem>
      </Dock>
    </Desktop>
  );
};

export default App;
